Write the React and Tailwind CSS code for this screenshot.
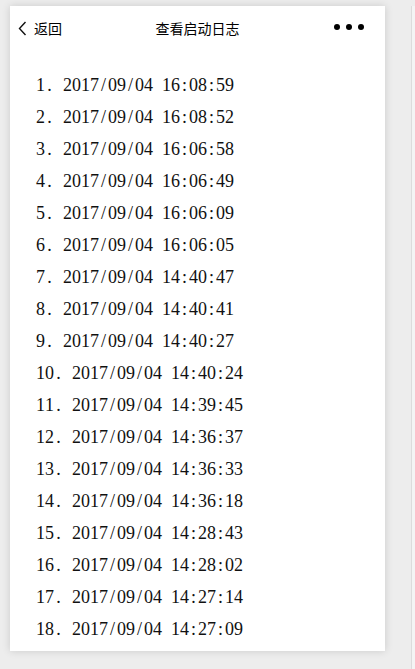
import React from "react";

const LOGS = [
  "2017/09/04 16:08:59",
  "2017/09/04 16:08:52",
  "2017/09/04 16:06:58",
  "2017/09/04 16:06:49",
  "2017/09/04 16:06:09",
  "2017/09/04 16:06:05",
  "2017/09/04 14:40:47",
  "2017/09/04 14:40:41",
  "2017/09/04 14:40:27",
  "2017/09/04 14:40:24",
  "2017/09/04 14:39:45",
  "2017/09/04 14:36:37",
  "2017/09/04 14:36:33",
  "2017/09/04 14:36:18",
  "2017/09/04 14:28:43",
  "2017/09/04 14:28:02",
  "2017/09/04 14:27:14",
  "2017/09/04 14:27:09",
];

// half-width cells, like the SimSun look of the original
const Cells = ({ text }) =>
  text.split("").map((c, i) => (
    <span key={i} className="inline-block w-[9px] text-center">
      {c === " " ? "\u00a0" : c}
    </span>
  ));

const App = () => {
  return (
    <div className="min-h-[669px] w-full bg-[#ededed] pt-[6px] flex">
      <div className="w-[375px] ml-[10px] h-[645px] bg-white shadow-[0_0_8px_rgba(0,0,0,0.15)] flex flex-col">
        {/* Header */}
        <div
          className="h-[44px] grid grid-cols-[1fr_auto_1fr] items-center px-[7px] text-[14px] text-black"
          style={{ fontFamily: '"Noto Sans CJK SC", sans-serif' }}
        >
          <div className="flex items-center gap-[7px] pl-[1px]">
            <svg width="9" height="15" viewBox="0 0 9 15" fill="none">
              <path d="M7.5 1L1.5 7.5L7.5 14" stroke="#111" strokeWidth="1.4" />
            </svg>
            <span>返回</span>
          </div>
          <div>查看启动日志</div>
          <div className="flex justify-end items-center gap-[6px] pr-[14px] -mt-[3px]">
            <span className="w-[6px] h-[6px] rounded-full bg-black" />
            <span className="w-[6px] h-[6px] rounded-full bg-black" />
            <span className="w-[6px] h-[6px] rounded-full bg-black" />
          </div>
        </div>

        {/* Log list */}
        <ol
          className="pl-[26px] pt-[19px] text-[18px] leading-[32px] text-[#111]"
          style={{ fontFamily: '"Liberation Serif", serif' }}
        >
          {LOGS.map((t, i) => (
            <li key={i} className="whitespace-nowrap">
              <Cells text={`${i + 1}. ${t}`} />
            </li>
          ))}
        </ol>
      </div>
      <div className="ml-auto w-[4px] border-l border-[#dcdcdc] bg-[#f4f4f4]" />
    </div>
  );
};

export default App;
